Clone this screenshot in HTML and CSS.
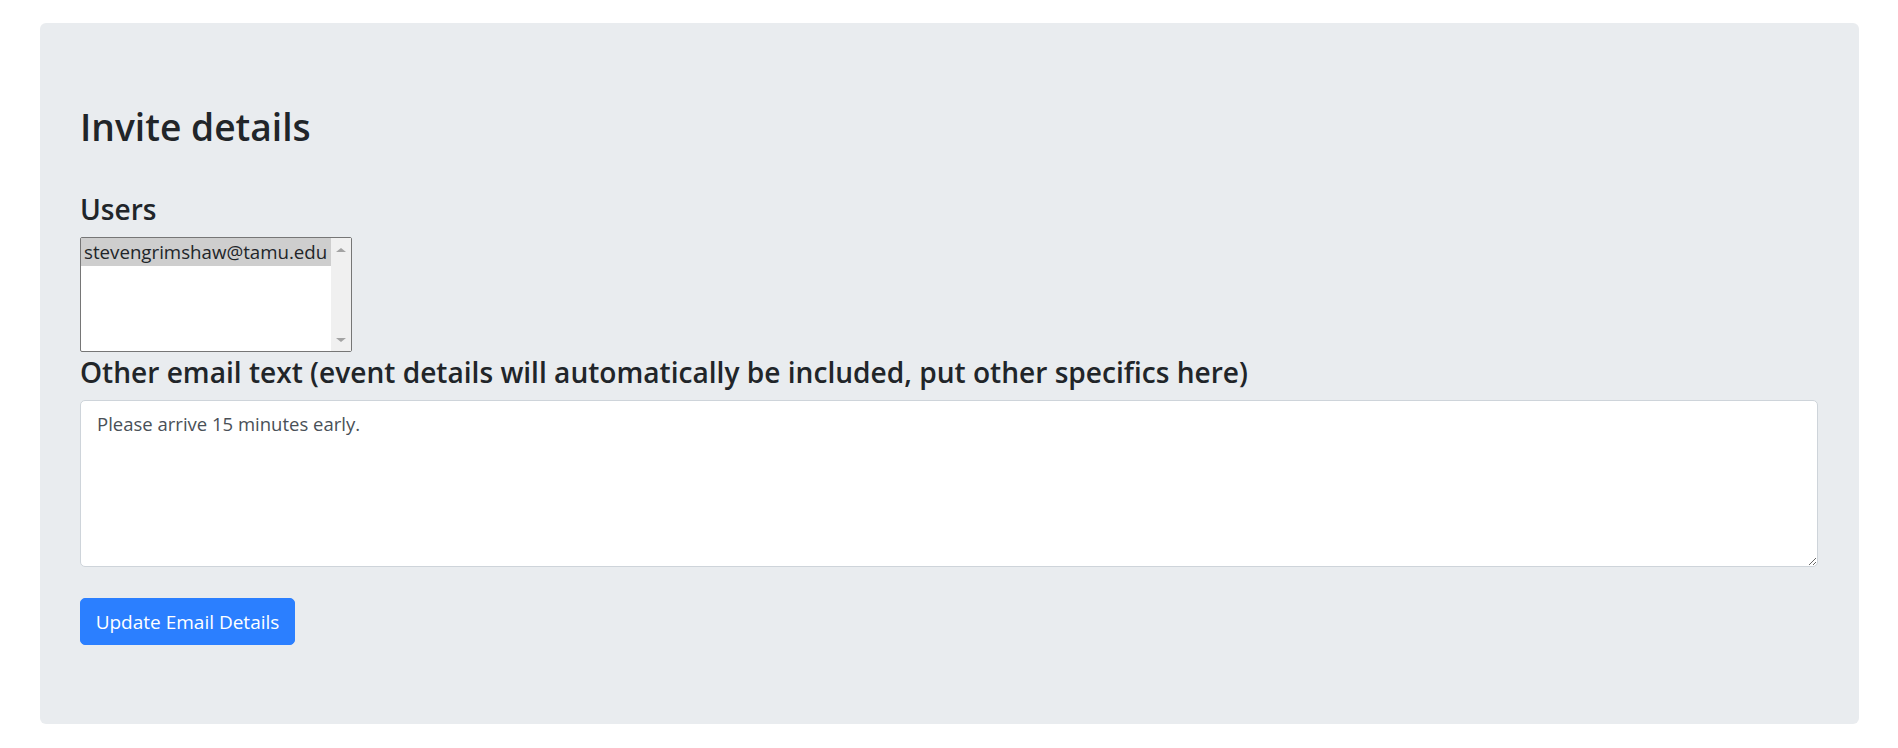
FILE: index.html
```html
<!DOCTYPE html>
<html lang="en">
<head>
<meta charset="utf-8">
<title>Invite details</title>
<link rel="stylesheet" href="styles.css">
</head>
<body>
<div class="page">
  <div class="jumbotron">
    <h2 class="title">Invite details</h2>
    <form class="invite-form">
      <label class="field-label">Users</label>
      <div class="listbox">
        <div class="listbox-items">
          <div class="option selected">stevengrimshaw@tamu.edu</div>
        </div>
        <div class="scrollbar">
          <span class="arrow up"></span>
          <span class="arrow down"></span>
        </div>
      </div>
      <label class="field-label email-label">Other email text (event details will automatically be included, put other specifics here)</label>
      <div class="textarea-wrap">
        <textarea class="email-text">Please arrive 15 minutes early.</textarea>
      </div>
      <button type="button" class="btn-primary">Update Email Details</button>
    </form>
  </div>
</div>
</body>
</html>
```

FILE: styles.css
```css
* { box-sizing: border-box; }
html, body { margin: 0; padding: 0; background: #fff; }
body {
  font-family: "Open Sans", "Noto Sans", sans-serif;
  color: #212529;
}
.page { padding: 23px 39px 24px 40px; }
.jumbotron {
  background: #e9ecef;
  border-radius: 6px;
  padding: 80px 41px 79px 40px;
}
.title {
  margin: 0 0 40px 0;
  font-size: 37.2px;
  font-weight: 600;
  line-height: 48px;
}
.invite-form { display: flex; flex-direction: column; align-items: flex-start; }
.field-label {
  display: block;
  font-size: 28.1px;
  font-weight: 600;
  line-height: 36px;
  margin-bottom: 10px;
}
.email-label { margin-top: 2px; }
.listbox {
  width: 272px;
  height: 115px;
  border: 1px solid #767676;
  border-radius: 2px;
  background: #fff;
  display: flex;
}
.listbox-items { flex: 1; }
.option {
  height: 28px;
  line-height: 28px;
  padding-left: 3px;
  font-size: 18.7px;
  color: #212529;
  white-space: nowrap;
}
.option.selected { background: #cecece; }
.scrollbar {
  width: 20px;
  background: #f0f0f0;
  display: flex;
  flex-direction: column;
  justify-content: space-between;
  align-items: center;
  padding: 10px 0 9px 0;
}
.arrow { width: 0; height: 0; border-left: 5px solid transparent; border-right: 5px solid transparent; }
.arrow.up { border-bottom: 4px solid #a3a3a3; }
.arrow.down { border-top: 4px solid #a3a3a3; }
.textarea-wrap { align-self: stretch; }
.email-text {
  display: block;
  width: 100%;
  height: 167px;
  border: 1px solid #ced4da;
  border-radius: 5px;
  background: #fff;
  padding: 8px 16px;
  font-family: inherit;
  font-size: 18.5px;
  line-height: 30px;
  color: #495057;
  resize: vertical;
}
.btn-primary {
  margin-top: 31px;
  width: 215px;
  height: 47px;
  background: #2b7fff;
  color: #fff;
  border: 1px solid #2b7fff;
  border-radius: 5px;
  font-family: inherit;
  font-size: 19px;
  padding: 0;
}
```
